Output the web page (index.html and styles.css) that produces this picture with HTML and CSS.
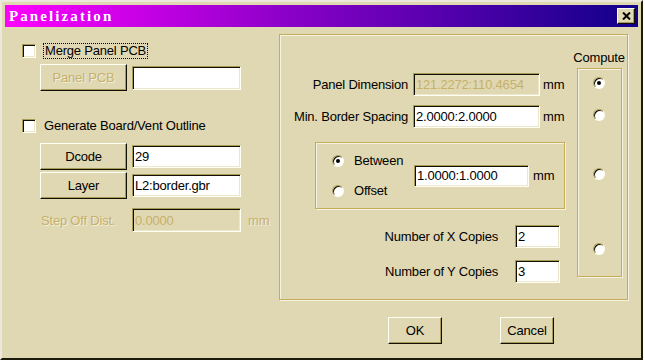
FILE: index.html
```html
<!DOCTYPE html>
<html lang="en">
<head>
    <meta charset="UTF-8">
    <title>Panelization</title>
    <link rel="stylesheet" href="styles.css">
</head>
<body>
    <div class="dialog">
        <div class="titlebar">
            <span class="title">Panelization</span>
            <span class="close">
                <svg width="9" height="8" viewBox="0 0 9 8"><path d="M1 0.5L8 7.5M8 0.5L1 7.5" stroke="#000" stroke-width="2"/></svg>
            </span>
        </div>

        <div class="main">
            <div class="left">
                <div class="check-row">
                    <span class="checkbox"></span>
                    <span class="check-label focus">Merge Panel PCB</span>
                </div>
                <div class="row row-panel">
                    <span class="btn btn-side disabled">Panel PCB</span>
                    <span class="edit edit-side"></span>
                </div>
                <div class="check-row row-gen">
                    <span class="checkbox"></span>
                    <span class="check-label">Generate Board/Vent Outline</span>
                </div>
                <div class="row row-dcode">
                    <span class="btn btn-side">Dcode</span>
                    <span class="edit edit-side">29</span>
                </div>
                <div class="row row-layer">
                    <span class="btn btn-side">Layer</span>
                    <span class="edit edit-side">L2:border.gbr</span>
                </div>
                <div class="row row-step">
                    <span class="step-label disabled">Step Off Dist.</span>
                    <span class="edit edit-step edit-disabled">0.0000</span>
                    <span class="step-unit disabled">mm</span>
                </div>
            </div>

            <div class="group">
                <div class="dims">
                    <div class="field-row">
                        <span class="field-label">Panel Dimension</span>
                        <span class="edit field-edit edit-disabled">121.2272:110.4654</span>
                        <span class="unit">mm</span>
                    </div>
                    <div class="field-row row-border">
                        <span class="field-label">Min. Border Spacing</span>
                        <span class="edit field-edit">2.0000:2.0000</span>
                        <span class="unit">mm</span>
                    </div>

                    <div class="inner-group">
                        <div class="radio-col">
                            <div class="radio-row"><span class="radio checked"></span><span class="radio-label">Between</span></div>
                            <div class="radio-row"><span class="radio"></span><span class="radio-label">Offset</span></div>
                        </div>
                        <span class="edit gap-edit">1.0000:1.0000</span>
                        <span class="gap-unit">mm</span>
                    </div>

                    <div class="copies-row row-x">
                        <span class="copies-label">Number of X Copies</span>
                        <span class="edit copies-edit">2</span>
                    </div>
                    <div class="copies-row row-y">
                        <span class="copies-label">Number of Y Copies</span>
                        <span class="edit copies-edit">3</span>
                    </div>
                </div>

                <div class="compute">
                    <span class="compute-label">Compute</span>
                    <div class="compute-box">
                        <span class="radio checked"></span>
                        <span class="radio"></span>
                        <span class="radio"></span>
                        <span class="radio"></span>
                    </div>
                </div>
            </div>
        </div>

        <div class="footer">
            <span class="btn btn-foot">OK</span>
            <span class="btn btn-foot">Cancel</span>
        </div>
    </div>
</body>
</html>
```

FILE: styles.css
```css
body {
    margin: 0;
    background: #fff;
    font-family: "Liberation Sans", Arial, sans-serif;
    font-size: 13px;
    letter-spacing: -0.2px;
    white-space: nowrap;
    color: #000;
}

.dialog {
    box-sizing: border-box;
    width: 643px;
    height: 360px;
    padding: 3px;
    background: #e0d8b2;
    border: 2px solid;
    border-color: #ece8dc #1c1a08 #1c1a08 #ece8dc;
}

/* title bar */
.titlebar {
    height: 22px;
    display: flex;
    align-items: center;
    justify-content: space-between;
    padding: 0 3px 0 4px;
    background: linear-gradient(to right, #ff00ff, #8a00c8 45%, #10008a);
}
.title {
    font-family: "Liberation Serif", serif;
    font-weight: bold;
    font-size: 15px;
    letter-spacing: 2.1px;
    color: #fff;
}
.close {
    box-sizing: border-box;
    width: 18px;
    height: 16px;
    display: flex;
    align-items: center;
    justify-content: center;
    background: #e0d8b2;
    border: 1px solid;
    border-color: #fffff4 #101000 #101000 #fffff4;
    box-shadow: inset -1px -1px 0 #a89c58;
}

/* common controls */
.btn {
    box-sizing: border-box;
    display: flex;
    align-items: center;
    justify-content: center;
    background: #e0d8b2;
    border: 1px solid;
    border-color: #fffff4 #101000 #101000 #fffff4;
    box-shadow: inset -1px -1px 0 #a89c58;
}
.edit {
    box-sizing: border-box;
    display: flex;
    align-items: center;
    padding: 0 2px;
    background: #fff;
    border: 1px solid;
    border-color: #a89c58 #fffff4 #fffff4 #a89c58;
    box-shadow: inset 1px 1px 0 #101000, inset -1px -1px 0 #ece6cc;
}
.edit-disabled {
    background: #e0d8b2;
    color: #c6b06a;
}
.disabled {
    color: #c6b06a;
    text-shadow: 1px 1px 0 #f2eedc;
}
.checkbox {
    box-sizing: border-box;
    width: 14px;
    height: 14px;
    background: #fff;
    border: 1px solid;
    border-color: #a89c58 #fffff4 #fffff4 #a89c58;
    box-shadow: inset 1px 1px 0 #101000, inset -1px -1px 0 #ece6cc;
}
.radio {
    box-sizing: border-box;
    position: relative;
    width: 12px;
    height: 12px;
    border-radius: 50%;
    background: #fff;
    border: 1px solid;
    border-color: #a89c58 #fffff4 #fffff4 #a89c58;
    box-shadow: inset 1px 1px 0 #101000;
}
.radio.checked::after {
    content: "";
    position: absolute;
    left: 3px;
    top: 3px;
    width: 4px;
    height: 4px;
    border-radius: 50%;
    background: #000;
}

/* layout */
.main {
    display: flex;
    padding: 7px 0 0 17px;
}
.left {
    width: 257px;
    padding-top: 9px;
}
.check-row {
    display: flex;
    align-items: center;
    height: 16px;
}
.check-label {
    margin-left: 8px;
    line-height: 14px;
}
.focus {
    margin-left: 7px;
    padding: 0 1px;
    border: 1px dotted #000;
}
.row {
    display: flex;
    align-items: center;
}
.btn-side {
    width: 87px;
    height: 27px;
    margin-left: 18px;
}
.edit-side {
    width: 109px;
    height: 24px;
    margin-left: 5px;
}
.row-panel { margin-top: 5px; }
.row-gen { margin-top: 27px; }
.row-dcode { margin-top: 9px; }
.row-dcode .edit-side,
.row-layer .edit-side { height: 23px; }
.row-layer { margin-top: 2px; }
.row-step { margin-top: 9px; }
.step-label {
    width: 91px;
    margin-left: 19px;
}
.edit-step {
    width: 109px;
    height: 24px;
}
.step-unit { margin-left: 7px; }

/* right group */
.group {
    box-sizing: border-box;
    width: 349px;
    height: 266px;
    display: flex;
    border: 1px solid #c4ac58;
    box-shadow: inset 1px 1px 0 #f6f2e2, 1px 1px 0 #f6f2e2;
}
.dims {
    width: 294px;
    padding-top: 38px;
}
.field-row {
    display: flex;
    align-items: center;
    height: 23px;
}
.row-border { margin-top: 9px; }
.field-label {
    width: 128px;
    text-align: right;
}
.field-edit {
    width: 127px;
    height: 23px;
    margin-left: 5px;
}
.unit { margin-left: 3px; }

.inner-group {
    box-sizing: border-box;
    width: 250px;
    height: 67px;
    margin: 14px 0 0 35px;
    padding-left: 16px;
    display: flex;
    align-items: center;
    border: 1px solid #c4ac58;
    box-shadow: inset 1px 1px 0 #f6f2e2, 1px 1px 0 #f6f2e2;
}
.radio-col {
    width: 82px;
    display: flex;
    flex-direction: column;
    gap: 14px;
}
.radio-row {
    display: flex;
    align-items: center;
    height: 16px;
}
.radio-label { margin-left: 10px; }
.gap-edit {
    width: 115px;
    height: 22px;
}
.gap-unit { margin-left: 4px; }

.copies-row {
    display: flex;
    align-items: center;
    height: 23px;
}
.row-x { margin-top: 16px; }
.row-y { margin-top: 12px; }
.copies-label {
    width: 218px;
    text-align: right;
}
.copies-edit {
    width: 45px;
    height: 23px;
    margin-left: 17px;
}

.compute {
    width: 50px;
    padding-top: 16px;
    display: flex;
    flex-direction: column;
    align-items: center;
}
.compute-label { line-height: 13px; }
.compute-box {
    box-sizing: border-box;
    width: 45px;
    height: 209px;
    margin-top: 4px;
    display: flex;
    flex-direction: column;
    align-items: center;
    border: 1px solid #c4ac58;
    box-shadow: inset 1px 1px 0 #f6f2e2, 1px 1px 0 #f6f2e2;
}
.compute-box .radio:nth-child(1) { margin-top: 8px; }
.compute-box .radio:nth-child(2) { margin-top: 20px; }
.compute-box .radio:nth-child(3) { margin-top: 47px; }
.compute-box .radio:nth-child(4) { margin-top: 63px; }

/* buttons at bottom */
.footer {
    display: flex;
    gap: 58px;
    padding: 17px 0 0 383px;
}
.btn-foot {
    width: 54px;
    height: 27px;
}
```
